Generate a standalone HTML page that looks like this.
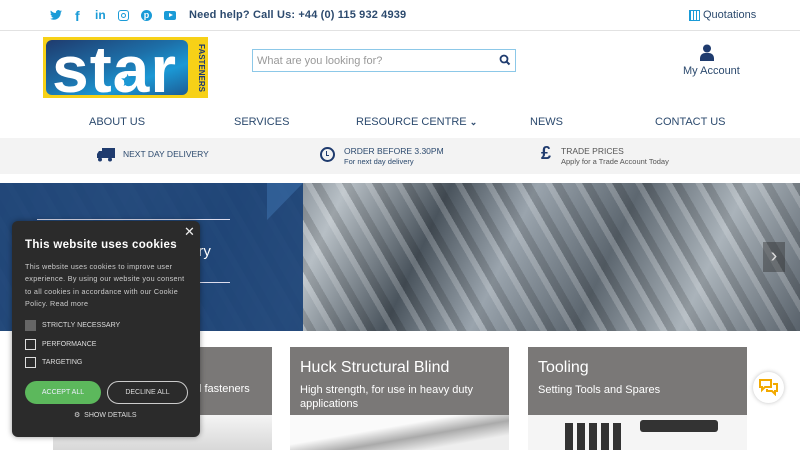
<!DOCTYPE html>
<html><head><meta charset="utf-8"><style>
*{margin:0;padding:0;box-sizing:border-box}
body{width:800px;height:450px;overflow:hidden;font-family:"Liberation Sans",sans-serif;background:#fff;position:relative}
.a{position:absolute}
.top{top:0;left:0;width:800px;height:31px;border-bottom:1px solid #e2e2e2}
.soc{color:#1a9bd7;font-size:13px;font-weight:bold}
.nav{font-size:11px;color:#2c4a6e;top:116px}
.card{background:#7a7877;color:#fff;width:219px;height:68px;top:347px}
.card h3{font-weight:normal;font-size:16px;margin:12px 0 0 10px}
.card p{font-size:11px;margin:6px 10px 0 10px;line-height:14px}
.cb{width:11px;height:11px;border:1.5px solid #ddd;left:25px}
.cl{left:42px;font-size:7px;color:#ddd}
</style></head><body>
<div class="a top"></div>
<svg class="a" style="left:50px;top:10px" width="12" height="10" viewBox="0 0 24 20"><path d="M24 2.4a10 10 0 0 1-2.8.8A5 5 0 0 0 23.3.5a10 10 0 0 1-3.1 1.2A4.9 4.9 0 0 0 11.8 6 14 14 0 0 1 1.7.9a4.9 4.9 0 0 0 1.5 6.6A5 5 0 0 1 1 6.9a4.9 4.9 0 0 0 3.9 4.9 5 5 0 0 1-2.2.1 4.9 4.9 0 0 0 4.6 3.4A10 10 0 0 1 0 17.3 14 14 0 0 0 7.5 19.5c9.1 0 14-7.5 14-14v-.6A10 10 0 0 0 24 2.4z" fill="#1a9bd7"/></svg>
<div class="a soc" style="left:75px;top:8px;font-size:14px">f</div>
<div class="a soc" style="left:95px;top:8px;font-size:12px">in</div>
<div class="a" style="left:118px;top:10px;width:11px;height:11px;border:1.5px solid #1a9bd7;border-radius:3px"><div style="width:5px;height:5px;border:1.3px solid #1a9bd7;border-radius:50%;margin:1.5px"></div></div>
<div class="a" style="left:141px;top:10px;width:11px;height:11px;border-radius:50%;background:#1a9bd7;color:#fff;font-size:9px;text-align:center;line-height:11px;font-weight:bold">p</div>
<div class="a" style="left:164px;top:11px;width:12px;height:9px;border-radius:2px;background:#1a9bd7"><div style="margin:2px 0 0 4.5px;border-left:4px solid #fff;border-top:2.5px solid transparent;border-bottom:2.5px solid transparent;width:0"></div></div>
<div class="a" style="left:189px;top:9px;font-size:11px;color:#2c4a6e;font-weight:bold;letter-spacing:.15px">Need help? Call Us: +44 (0) 115 932 4939</div>
<div class="a" style="left:689px;top:10px;width:11px;height:11px;border:1.5px solid #1a9bd7;background:repeating-linear-gradient(90deg,#1a9bd7 0 1px,transparent 1px 3px)"></div>
<div class="a" style="left:703px;top:9px;font-size:11px;color:#2c4a6e">Quotations</div>
<!-- logo -->
<div class="a" style="left:43px;top:37px;width:165px;height:61px;background:#f7d117"></div>
<div class="a" style="left:46px;top:40px;width:142px;height:55px;border-radius:6px;overflow:hidden;background:linear-gradient(160deg,#1f3b6e 0%,#1d6fa8 45%,#1b98d5 70%,#1c5c94 100%)"></div>
<div class="a" style="left:52px;top:36px;font-size:66px;line-height:66px;font-weight:bold;color:#fff;letter-spacing:1px">star</div>
<div class="a" style="left:120px;top:71px;color:#1b98d5;font-size:17px">★</div>
<div class="a" style="left:190px;top:40px;width:16px;height:56px;color:#1f3b6e;font-size:8px;font-weight:bold;writing-mode:vertical-rl;text-align:center">FASTENERS</div>
<!-- search -->
<div class="a" style="left:252px;top:49px;width:264px;height:23px;border:1px solid #8cc8e8"></div>
<div class="a" style="left:257px;top:55px;font-size:11px;color:#999">What are you looking for?</div>
<svg class="a" style="left:499px;top:54px" width="12" height="12" viewBox="0 0 12 12"><circle cx="5" cy="5" r="3.5" fill="none" stroke="#1f3b6e" stroke-width="1.8"/><path d="M7.5 7.5L10.5 10.5" stroke="#1f3b6e" stroke-width="2"/></svg>
<svg class="a" style="left:700px;top:44px" width="14" height="17" viewBox="0 0 14 17"><circle cx="7" cy="4.5" r="4" fill="#1f3b6e"/><path d="M0 17v-3a5 5 0 0 1 5-5h4a5 5 0 0 1 5 5v3z" fill="#1f3b6e"/></svg>
<div class="a" style="left:683px;top:65px;font-size:11px;color:#2c4a6e">My Account</div>
<div class="a nav" style="left:89px">ABOUT US</div>
<div class="a nav" style="left:234px">SERVICES</div>
<div class="a nav" style="left:356px">RESOURCE CENTRE <b style="font-size:9px">⌄</b></div>
<div class="a nav" style="left:530px">NEWS</div>
<div class="a nav" style="left:655px">CONTACT US</div>
<div class="a" style="left:0;top:138px;width:800px;height:36px;background:#f3f3f3"></div>
<svg class="a" style="left:97px;top:148px" width="18" height="14" viewBox="0 0 18 14"><rect x="5" y="0" width="13" height="10" fill="#1f3b6e"/><path d="M0 10V6l2-3h3v7z" fill="#1f3b6e"/><circle cx="3" cy="11.5" r="2" fill="#1f3b6e"/><circle cx="13" cy="11.5" r="2" fill="#1f3b6e"/></svg>
<div class="a" style="left:123px;top:149px;font-size:8.5px;color:#2c4a6e">NEXT DAY DELIVERY</div>
<div class="a" style="left:320px;top:147px;width:15px;height:15px;border:2.5px solid #1f3b6e;border-radius:50%"><div style="position:absolute;left:4px;top:2px;width:3px;height:5px;border-left:1.5px solid #1f3b6e;border-bottom:1.5px solid #1f3b6e"></div></div>
<div class="a" style="left:344px;top:146px;font-size:8.5px;color:#2c4a6e">ORDER BEFORE 3.30PM</div>
<div class="a" style="left:344px;top:157px;font-size:7.5px;color:#2c4a6e">For next day delivery</div>
<div class="a" style="left:541px;top:143px;font-size:18px;font-weight:bold;color:#1f3b6e">£</div>
<div class="a" style="left:561px;top:146px;font-size:8.5px;color:#555">TRADE PRICES</div>
<div class="a" style="left:561px;top:157px;font-size:7.5px;color:#555">Apply for a Trade Account Today</div>
<!-- hero -->
<div class="a" style="left:0;top:183px;width:800px;height:148px;background:repeating-linear-gradient(60deg,rgba(255,255,255,.18) 0 6px,rgba(0,0,0,.15) 6px 14px,transparent 14px 26px),linear-gradient(115deg,#6d7882 0%,#a8b2ba 15%,#59636d 28%,#b7bfc5 40%,#4a545d 52%,#9aa4ad 62%,#5d6770 74%,#aab3ba 86%,#59626b 100%)"></div>
<div class="a" style="left:0;top:183px;width:303px;height:148px;background:#1d4478;opacity:.95"></div>
<div class="a" style="left:267px;top:183px;width:0;height:0;border-top:37px solid #3b6ea8;border-right:36px solid transparent;opacity:.6"></div>
<div class="a" style="left:37px;top:219px;width:193px;height:1px;background:#dde"></div>
<div class="a" style="left:37px;top:282px;width:193px;height:1px;background:#dde"></div>
<div class="a" style="left:190px;top:243px;font-size:15px;color:#fff">ory</div>
<div class="a" style="left:763px;top:242px;width:22px;height:30px;background:rgba(40,40,40,.4);color:#ddd;font-size:20px;text-align:center;line-height:28px">›</div>
<!-- cards -->
<div class="a card" style="left:53px"><p style="margin-top:35px;margin-left:146px">l fasteners</p></div>
<div class="a card" style="left:290px"><h3>Huck Structural Blind</h3><p>High strength, for use in heavy duty applications</p></div>
<div class="a card" style="left:528px"><h3>Tooling</h3><p>Setting Tools and Spares</p></div>
<div class="a" style="left:53px;top:415px;width:219px;height:35px;background:linear-gradient(#f4f4f4,#d8d8d8)"></div>
<div class="a" style="left:290px;top:415px;width:219px;height:35px;background:linear-gradient(170deg,#fafafa 40%,#aaa 60%,#eee 80%)"></div>
<div class="a" style="left:528px;top:415px;width:219px;height:35px;background:#f5f5f5"></div>
<div class="a" style="left:565px;top:423px;width:60px;height:27px;background:repeating-linear-gradient(90deg,#333 0 8px,#f5f5f5 8px 12px)"></div>
<div class="a" style="left:640px;top:420px;width:78px;height:12px;background:#333;border-radius:3px"></div>
<div class="a" style="left:753px;top:372px;width:31px;height:31px;border-radius:50%;background:#fff;box-shadow:0 0 4px rgba(0,0,0,.25)"></div>
<svg class="a" style="left:758px;top:378px" width="21" height="18" viewBox="0 0 21 18"><path d="M2 2h11v7H7l-3 3V9H2z" fill="none" stroke="#f2a900" stroke-width="2"/><path d="M15 6h4v7h-2v3l-3-3H9v-2" fill="none" stroke="#f2a900" stroke-width="2"/></svg>
<!-- cookie -->
<div class="a" style="left:12px;top:221px;width:188px;height:216px;background:#2b2b2b;border-radius:6px;box-shadow:0 0 6px rgba(0,0,0,.4)"></div>
<div class="a" style="left:184px;top:224px;color:#eee;font-size:13px">✕</div>
<div class="a" style="left:25px;top:239px;color:#fff;font-size:11.5px;font-weight:bold;letter-spacing:.3px">This website uses cookies</div>
<div class="a" style="left:25px;top:261px;width:165px;color:#ccc;font-size:7.2px;line-height:12.3px;letter-spacing:.3px">This website uses cookies to improve user experience. By using our website you consent to all cookies in accordance with our Cookie Policy. Read more</div>
<div class="a cb" style="top:320px;background:#666;border-color:#666"></div>
<div class="a cl" style="top:322px">STRICTLY NECESSARY</div>
<div class="a cb" style="top:339px"></div><div class="a cl" style="top:341px">PERFORMANCE</div>
<div class="a cb" style="top:357px"></div><div class="a cl" style="top:359px">TARGETING</div>
<div class="a" style="left:25px;top:381px;width:76px;height:23px;border-radius:12px;background:#5cb85c;color:#eef;font-size:7px;text-align:center;line-height:23px">ACCEPT ALL</div>
<div class="a" style="left:107px;top:381px;width:81px;height:23px;border-radius:12px;border:1px solid #ccc;color:#ddd;font-size:7px;text-align:center;line-height:21px">DECLINE ALL</div>
<div class="a" style="left:74px;top:411px;color:#ddd;font-size:7px">⚙&nbsp; SHOW DETAILS</div>
</body></html>
